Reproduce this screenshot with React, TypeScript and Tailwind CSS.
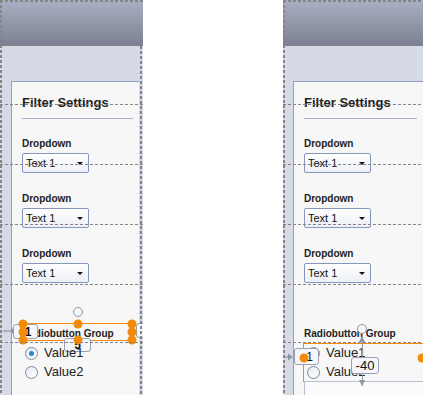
import type { ReactNode } from "react";

// Two states of the same filter panel in a form designer, side by side.
// Guides, selection frames and handles lie over the panel, so they are absolute.

const guideRows = [45, 104, 164, 224, 284, 342];

const dashX = "bg-[repeating-linear-gradient(90deg,#858585_0_3px,transparent_3px_5px)]";
const dashY = "bg-[repeating-linear-gradient(180deg,#858585_0_3px,transparent_3px_5px)]";

function Select() {
  return (
    <div className="mt-[3px] flex h-[20px] w-[67px] items-center justify-between rounded-[2px] border border-[#8796bd] bg-gradient-to-b from-white to-[#edf0f7] pl-[3px] pr-[5px] text-[11px] text-[#111]">
      <span>Text 1</span>
      <span className="h-0 w-0 border-x-[3px] border-t-[3px] border-x-transparent border-t-[#111]" />
    </div>
  );
}

function Radio({ checked, label }: { checked?: boolean; label: string }) {
  return (
    <div className="flex items-center gap-[6px] text-[13px] leading-[16px] text-[#222]">
      <span className="flex h-[13px] w-[13px] items-center justify-center rounded-full border border-[#7a88a6] bg-gradient-to-br from-[#e6e9f0] to-white">
        {checked && <span className="h-[5px] w-[5px] rounded-full bg-[#2a86d0]" />}
      </span>
      {label}
    </div>
  );
}

function Handle({ className }: { className: string }) {
  return <span className={`absolute h-[9px] w-[9px] -translate-x-1/2 -translate-y-1/2 rounded-full bg-[#f58a07] ${className}`} />;
}

function Ring({ className }: { className: string }) {
  return <span className={`absolute h-[10px] w-[10px] -translate-x-1/2 rounded-full border border-[#8d95a5] bg-[#f3f5f9] ${className}`} />;
}

function Tag({ children, className }: { children?: ReactNode; className: string }) {
  return (
    <span
      className={`absolute flex items-center justify-center rounded-[3px] border border-[#9aa0ad] bg-[#f4f6fb] leading-none text-[#111] ${className}`}
    >
      {children}
    </span>
  );
}

// small gray arrow pointing right, into a tag
function Pointer({ className }: { className: string }) {
  return (
    <svg className={`absolute ${className}`} width="14" height="8" viewBox="0 0 14 8">
      <path d="M0 4h9" stroke="#8d95a5" strokeWidth="1.2" />
      <path d="M8 0.5 13 4 8 7.5z" fill="#8d95a5" />
    </svg>
  );
}

function Panel({
  offset,
  card,
  label,
  radios,
  children,
}: {
  offset: string;
  card: string;
  label?: ReactNode;
  radios?: ReactNode;
  children?: ReactNode;
}) {
  return (
    <div className={`relative h-full overflow-hidden ${offset}`}>
      <div className="h-[46px] bg-gradient-to-b from-[#aab0c3] to-[#7b7f91]" />
      <div className={`h-[349px] bg-[#d6dae7] pt-[35px] ${card}`}>
        <div className="h-full border-l border-t border-[#93a0bd] bg-[#f7f7f7] pl-[10px] pr-[6px] pt-[13px]">
          <div className="text-[13px] font-bold leading-[15px] text-[#222]">Filter Settings</div>
          <div className="mt-[8px] h-px bg-[#a7b0c6]" />
          {[0, 1, 2].map((i) => (
            <div key={i} className={i === 0 ? "mt-[19px]" : "mt-[20px]"}>
              <div className="text-[10px] font-bold leading-[12px] text-[#222]">Dropdown</div>
              <Select />
            </div>
          ))}
          <div className="relative mt-[45px] text-[10px] font-bold leading-[12px] text-[#222]">
            Radiobutton Group
            {label}
          </div>
          <div className="relative mt-[5px] flex flex-col gap-[3px] pl-[3px]">
            <Radio checked label="Value1" />
            <Radio label="Value2" />
            {radios}
          </div>
        </div>
      </div>

      <div className={`absolute inset-x-0 top-0 h-[2px] ${dashX}`} />
      {guideRows.map((y) => (
        <div key={y} className={`absolute inset-x-0 h-px ${dashX}`} style={{ top: y }} />
      ))}
      <div className={`absolute inset-y-0 left-0 w-[2px] ${dashY}`} />
      {children}
    </div>
  );
}

export default function App() {
  return (
    <div className="flex h-[395px] w-[423px] justify-between overflow-hidden bg-white font-['Liberation_Sans',Arial,sans-serif]">
      <Panel
        offset="w-[143px]"
        card="pl-[11px] pr-[4px]"
        label={
          <div className="absolute inset-x-0 bottom-[-1px] top-[-5px] border-[1.5px] border-[#f58a07]">
            <Ring className="left-1/2 top-[-17px]" />
            <Pointer className="left-[-20px] top-[3px]" />
            <Tag className="left-[-10px] top-0 h-[15px] w-[25px] pl-[5px] text-[12px]">1</Tag>
            <Tag className="left-[41px] top-[14px] h-[14px] w-[27px] text-[12px]">5</Tag>
            <Tag className="left-[113px] top-[-1px] h-[15px] w-[20px]" />
            <Handle className="left-0 top-0" />
            <Handle className="left-1/2 top-0" />
            <Handle className="left-full top-0" />
            <Handle className="left-0 top-1/2" />
            <Handle className="left-full top-1/2" />
            <Handle className="left-0 top-full" />
            <Handle className="left-1/2 top-full" />
            <Handle className="left-full top-full" />
          </div>
        }
      >
        <div className={`absolute bottom-0 left-[140px] top-[46px] w-[2px] ${dashY}`} />
      </Panel>

      <Panel
        offset="w-[140px]"
        card="pl-[10px]"
        radios={
          <div className="absolute left-[-1px] top-[-2px] h-[39px] w-[130px] border-[1.5px] border-[#f58a07]">
            <div className="absolute left-0 top-full h-[20px] w-full border-l border-t border-[#b9c0cf] bg-[#fbfbfc]" />
            <Ring className="left-[58px] top-[-20px]" />
            <span className="absolute left-[58px] top-[-10px] h-[52px] w-px bg-[#8d95a5]" />
            <span className="absolute left-[55px] top-[-8px] h-0 w-0 border-x-[3.5px] border-b-[6px] border-x-transparent border-b-[#8d95a5]" />
            <span className="absolute left-[55px] top-[36px] h-0 w-0 border-x-[3.5px] border-t-[6px] border-x-transparent border-t-[#8d95a5]" />
            <Pointer className="left-[-24px] top-[9px]" />
            <Tag className="left-[-10px] top-[4px] h-[17px] w-[25px] pl-[6px] text-[12px]">1</Tag>
            <Handle className="left-0 top-[14px]" />
            <Tag className="left-[47px] top-[13px] h-[17px] w-[28px] text-[13px]">-40</Tag>
            <Handle className="left-[118px] top-[14px]" />
          </div>
        }
      />
    </div>
  );
}
